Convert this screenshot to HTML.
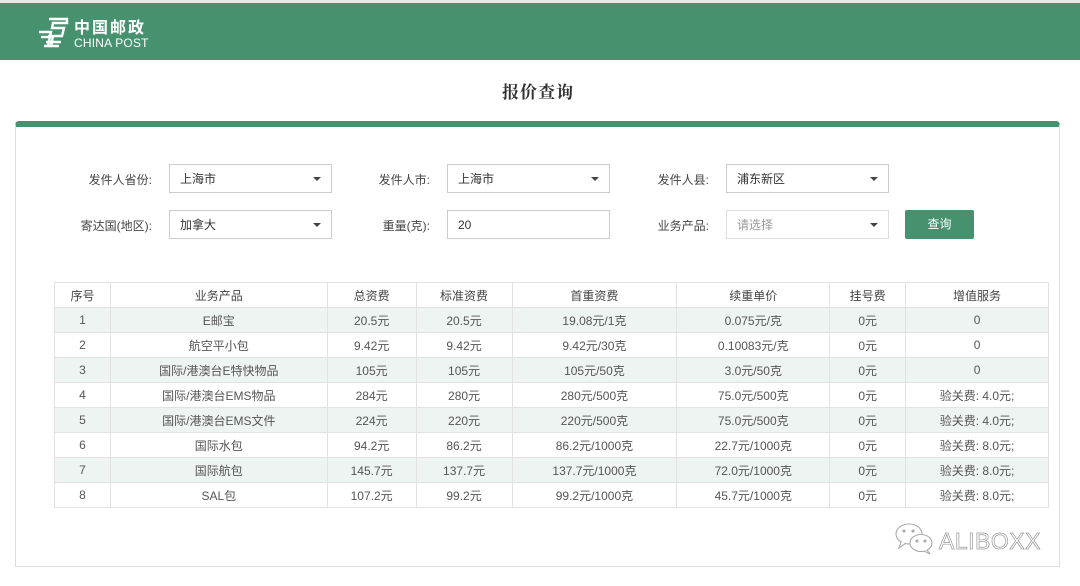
<!DOCTYPE html>
<html><head><meta charset="utf-8"><style>
*{margin:0;padding:0;box-sizing:border-box}
body{width:1080px;height:586px;background:#fff;position:relative;overflow:hidden;font-family:"Liberation Sans","Noto Sans CJK SC",sans-serif;font-size:12px;color:#555}
.hdr{position:absolute;left:0;top:3px;width:1080px;height:57px;background:#46926f}
.top{position:absolute;left:0;top:0;width:1080px;height:3px;background:#e8e8e8}
.title{position:absolute;left:0;width:1076px;top:78px;text-align:center;font-size:17px;font-weight:bold;color:#333;font-family:"Noto Serif CJK SC",serif;letter-spacing:1px}
.card{position:absolute;left:15px;top:121px;width:1045px;height:446px;border:1px solid #ddd;border-top:6px solid #46926f;border-radius:4px 4px 0 0}
.lbl{position:absolute;text-align:right;width:120px;font-size:12px;color:#444}
.sel{position:absolute;width:163px;height:29px;border:1px solid #ccc;padding-left:10px;line-height:29px;color:#333;font-size:12px}
.sel.a:after{content:"";position:absolute;right:10px;top:12px;border:4px solid transparent;border-top:4px solid #444}
.btn{position:absolute;left:905px;top:210px;width:69px;height:29px;background:#46926f;color:#fff;text-align:center;line-height:29px;border-radius:2px}
table{position:absolute;left:54px;top:282px;border-collapse:collapse;width:995px}
td{border:1px solid #e2e2e2;height:25px;text-align:center;font-size:12px;color:#555;padding:0}
tr:nth-child(even) td{background:#eef4f1}
tr:first-child td{background:#fff;color:#444}
</style></head><body>
<div class="top"></div>
<div class="hdr">
<svg style="position:absolute;left:37px;top:13px" width="34" height="32" viewBox="0 0 34 32" fill="none" stroke="#fff" stroke-width="2.4">
<path d="M12 3 H30 V7 H16 L15 12 H27 L25 20 H11"/><path d="M2 16 H14 L11 30"/><path d="M4 21 H12"/><path d="M9 26 H24 M7 30 H22"/><path d="M16 20 L14 30"/>
</svg>
<div style="position:absolute;left:74px;top:14px;color:#fff;font-size:16px;font-weight:bold;letter-spacing:2px;font-family:'Noto Sans CJK SC',sans-serif;line-height:18px">中国邮政</div>
<div style="position:absolute;left:74px;top:33px;color:#fff;font-size:12px;line-height:14px;letter-spacing:0.2px">CHINA POST</div>
</div>
<div class="title">报价查询</div>
<div class="card"></div>
<div class="lbl" style="left:32px;top:171px">发件人省份:</div>
<div class="sel a" style="left:169px;top:164px">上海市</div>
<div class="lbl" style="left:310px;top:171px">发件人市:</div>
<div class="sel a" style="left:447px;top:164px">上海市</div>
<div class="lbl" style="left:589px;top:171px">发件人县:</div>
<div class="sel a" style="left:726px;top:164px">浦东新区</div>
<div class="lbl" style="left:32px;top:217px">寄达国(地区):</div>
<div class="sel a" style="left:169px;top:210px">加拿大</div>
<div class="lbl" style="left:310px;top:217px">重量(克):</div>
<div class="sel" style="left:447px;top:210px">20</div>
<div class="lbl" style="left:589px;top:217px">业务产品:</div>
<div class="sel a" style="left:726px;top:210px;color:#999;border-color:#ddd">请选择</div>
<div class="btn">查询</div>
<table>
<colgroup><col style="width:56px"><col style="width:217px"><col style="width:89px"><col style="width:96px"><col style="width:165px"><col style="width:153px"><col style="width:76px"><col style="width:143px"></colgroup>
<tr><td>序号</td><td>业务产品</td><td>总资费</td><td>标准资费</td><td>首重资费</td><td>续重单价</td><td>挂号费</td><td>增值服务</td></tr>
<tr><td>1</td><td>E邮宝</td><td>20.5元</td><td>20.5元</td><td>19.08元/1克</td><td>0.075元/克</td><td>0元</td><td>0</td></tr>
<tr><td>2</td><td>航空平小包</td><td>9.42元</td><td>9.42元</td><td>9.42元/30克</td><td>0.10083元/克</td><td>0元</td><td>0</td></tr>
<tr><td>3</td><td>国际/港澳台E特快物品</td><td>105元</td><td>105元</td><td>105元/50克</td><td>3.0元/50克</td><td>0元</td><td>0</td></tr>
<tr><td>4</td><td>国际/港澳台EMS物品</td><td>284元</td><td>280元</td><td>280元/500克</td><td>75.0元/500克</td><td>0元</td><td>验关费: 4.0元;</td></tr>
<tr><td>5</td><td>国际/港澳台EMS文件</td><td>224元</td><td>220元</td><td>220元/500克</td><td>75.0元/500克</td><td>0元</td><td>验关费: 4.0元;</td></tr>
<tr><td>6</td><td>国际水包</td><td>94.2元</td><td>86.2元</td><td>86.2元/1000克</td><td>22.7元/1000克</td><td>0元</td><td>验关费: 8.0元;</td></tr>
<tr><td>7</td><td>国际航包</td><td>145.7元</td><td>137.7元</td><td>137.7元/1000克</td><td>72.0元/1000克</td><td>0元</td><td>验关费: 8.0元;</td></tr>
<tr><td>8</td><td>SAL包</td><td>107.2元</td><td>99.2元</td><td>99.2元/1000克</td><td>45.7元/1000克</td><td>0元</td><td>验关费: 8.0元;</td></tr>
</table>
<svg style="position:absolute;left:894px;top:522px" width="42" height="34" viewBox="0 0 42 34" fill="#fff" stroke="#aaa" stroke-width="1.1">
<ellipse cx="15" cy="12" rx="13" ry="10"/><path d="M7 20 L5 26 L12 21" />
<ellipse cx="27" cy="21" rx="11" ry="8.5"/><path d="M33 28 L36 32 L30 29"/>
<circle cx="10" cy="9" r="1" fill="#aaa"/><circle cx="19" cy="9" r="1" fill="#aaa"/><circle cx="23" cy="19" r="1" fill="#aaa"/><circle cx="31" cy="19" r="1" fill="#aaa"/>
</svg>
<div style="position:absolute;left:939px;top:527px;font-size:23px;color:#fff;-webkit-text-stroke:0.7px #999;letter-spacing:0.5px;line-height:28px">ALIBOXX</div>
</body></html>
